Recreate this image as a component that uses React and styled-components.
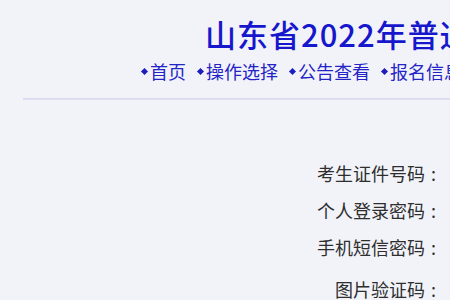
import React from 'react';
import styled, { createGlobalStyle } from 'styled-components';

const GlobalStyle = createGlobalStyle`
  html, body {
    margin: 0;
    padding: 0;
    background: #f2f3f9;
    overflow: hidden;
  }
  body {
    font-family: "Noto Sans CJK SC", "Noto Sans", sans-serif;
  }
`;

const NAV = ['首页', '操作选择', '公告查看', '报名信息', '考生须知'];
const FIELDS = [
  { label: '考生证件号码' },
  { label: '个人登录密码' },
  { label: '手机短信密码' },
  { label: '图片验证码', tall: true },
];

export default function App() {
  return (
    <Page>
      <GlobalStyle />
      <Header>
        <Title>山东省2022年普通高校招生考试报名系统</Title>
        <Nav>
          {NAV.map(item => (
            <NavItem key={item}>
              <Bullet />
              {item}
            </NavItem>
          ))}
        </Nav>
      </Header>
      <Divider />
      <Form>
        {FIELDS.map(f => (
          <Row key={f.label} $tall={f.tall}>
            <Label>
              {f.label}
              <Colon>:</Colon>
            </Label>
            <Field />
          </Row>
        ))}
      </Form>
    </Page>
  );
}

const Page = styled.div`
  width: 1000px;
  height: 300px;
  display: flex;
  flex-direction: column;
`;

const Header = styled.div`
  display: flex;
  flex-direction: column;
  align-items: flex-start;
  padding-top: 14px;
`;

const Title = styled.h1`
  margin: 0 0 0 205px;
  font-size: 31px;
  line-height: 40px;
  font-weight: 500;
  color: #1616cc;
  white-space: nowrap;
  letter-spacing: 1px;
`;

const Nav = styled.div`
  display: flex;
  gap: 10px;
  margin: 4px 0 0 140px;
  white-space: nowrap;
`;

const NavItem = styled.span`
  display: flex;
  align-items: center;
  font-size: 18px;
  line-height: 26px;
  color: #2424c6;
`;

const Bullet = styled.i`
  width: 5px;
  height: 5px;
  margin: 0 3px 0 2px;
  background: #1d1dbf;
  transform: rotate(45deg);
`;

const Divider = styled.div`
  flex: none;
  margin: 14px 0 0 23px;
  height: 2px;
  background: #dfe1f2;
  border-top: 1px solid #d8dbef;
  box-sizing: border-box;
`;

const Form = styled.div`
  display: flex;
  flex-direction: column;
  padding-top: 54px;
`;

const Row = styled.div`
  display: grid;
  grid-template-columns: 443px 1fr;
  align-items: center;
  height: ${p => (p.$tall ? 47 : 37)}px;
`;

const Label = styled.span`
  display: flex;
  justify-content: flex-end;
  font-size: 18px;
  color: #2e2e2e;
  white-space: nowrap;
`;

const Colon = styled.span`
  width: 18px;
  padding-right: 7px;
  box-sizing: border-box;
  text-align: right;
`;

const Field = styled.span`
  display: block;
`;
